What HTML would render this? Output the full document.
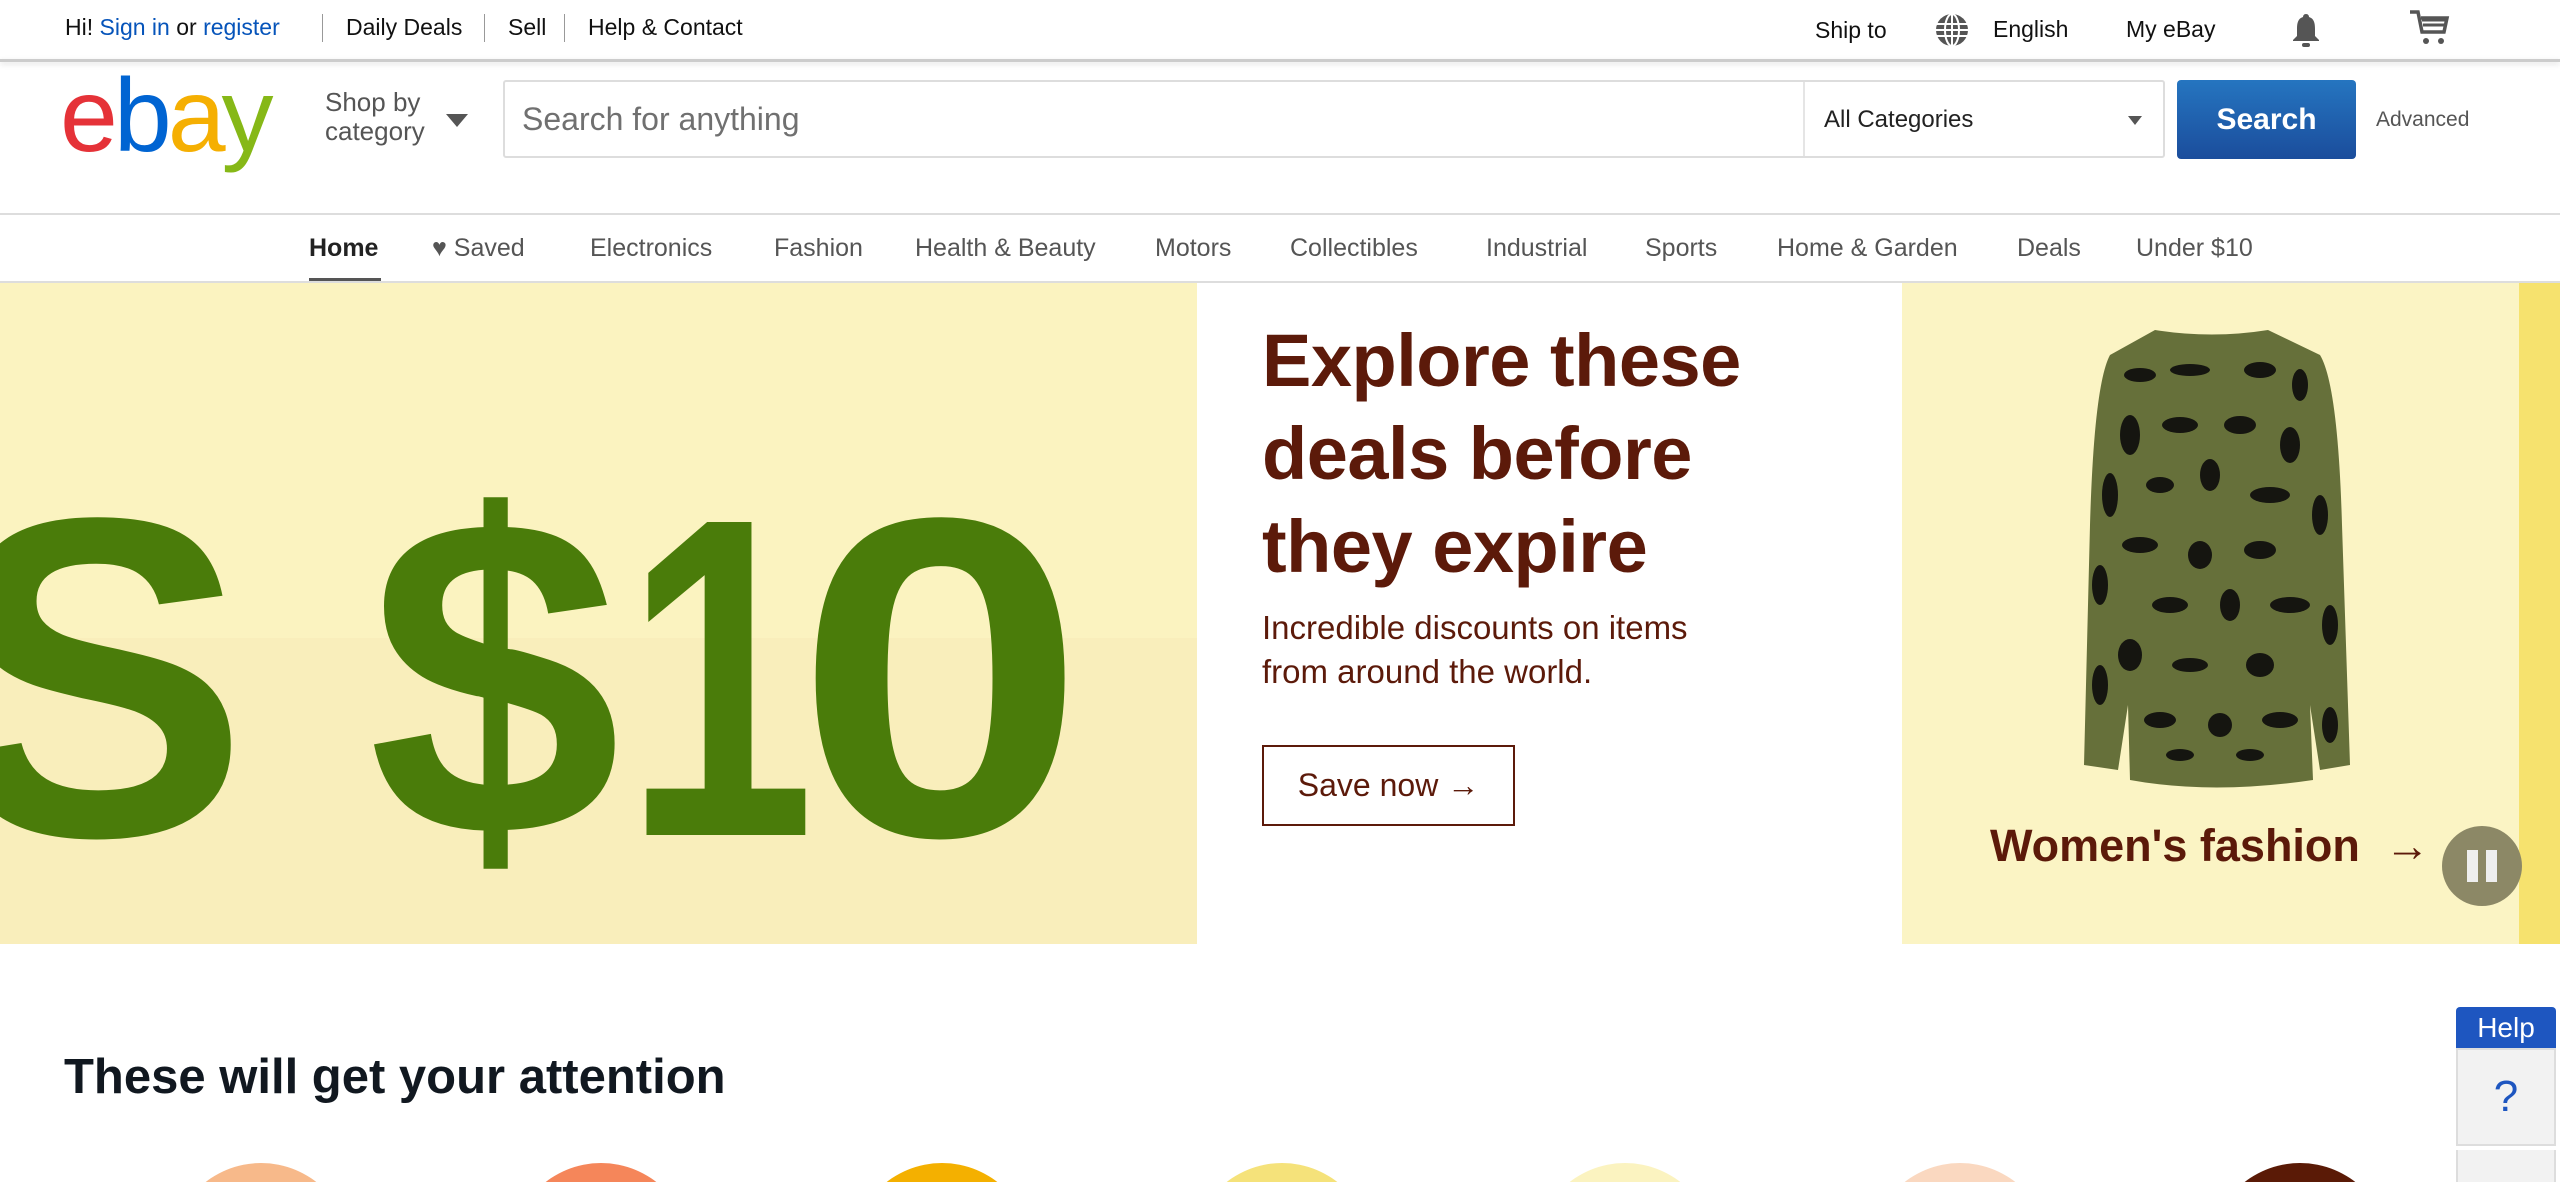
<!DOCTYPE html>
<html style="width:2560px;height:1182px;overflow:hidden"><head><meta charset="utf-8"><style>
*{margin:0;padding:0;box-sizing:border-box}
body{width:2560px;height:1182px;overflow:hidden;background:#fff;font-family:"Liberation Sans",Arial,sans-serif;position:relative;color:#111}
.a{position:absolute;white-space:nowrap}
.top{font-size:23px;color:#111;top:14px}
.sep{position:absolute;top:14px;width:1px;height:28px;background:#999}
.nav{font-size:25px;color:#555;top:234px}
.d{font-size:455px;font-weight:bold;color:#4a7c0a;line-height:1;top:168px}
</style></head><body>
<!-- top bar -->
<div class="a top" style="left:65px">Hi! <span style="color:#0654ba">Sign in</span> or <span style="color:#0654ba">register</span></div>
<div class="sep" style="left:322px"></div>
<div class="a top" style="left:346px">Daily Deals</div>
<div class="sep" style="left:484px"></div>
<div class="a top" style="left:508px">Sell</div>
<div class="sep" style="left:564px"></div>
<div class="a top" style="left:588px">Help &amp; Contact</div>
<div class="a top" style="left:1815px;top:17px">Ship to</div>
<svg class="a" style="left:1934px;top:12px" width="36" height="36" viewBox="0 0 36 36"><circle cx="18" cy="18" r="16" fill="#555"/><g stroke="#fff" stroke-width="2" fill="none"><ellipse cx="18" cy="18" rx="7" ry="16"/><line x1="18" y1="2" x2="18" y2="34"/><line x1="2" y1="12" x2="34" y2="12"/><line x1="2" y1="24" x2="34" y2="24"/><line x1="2" y1="18" x2="34" y2="18"/></g></svg>
<div class="a top" style="left:1993px;top:16px">English</div>
<div class="a top" style="left:2126px;top:16px">My eBay</div>
<svg class="a" style="left:2290px;top:12px" width="32" height="36" viewBox="0 0 32 36"><path d="M16 2c2 0 3 1.5 3 3 5 1.5 6 6 6 12v7l4 4v1H3v-1l4-4v-7c0-6 1-10.5 6-12 0-1.5 1-3 3-3z" fill="#555"/><rect x="12" y="31" width="8" height="4" rx="2" fill="#555"/></svg>
<svg class="a" style="left:2408px;top:10px" width="44" height="36" viewBox="0 0 44 36"><path d="M2 2h8l4 20h22l3-14H13" fill="none" stroke="#555" stroke-width="3.5"/><path d="M14 10h24M15 15h22" stroke="#555" stroke-width="3"/><circle cx="18" cy="31" r="3" fill="#555"/><circle cx="33" cy="31" r="3" fill="#555"/></svg>
<div class="a" style="left:0;top:59px;width:2560px;height:3px;background:#ccc;box-shadow:0 2px 6px #ddd"></div>
<!-- logo -->
<div class="a" style="left:60px;top:64px;font-size:104px;letter-spacing:-4px;line-height:1">
<span style="color:#e53238">e</span><span style="color:#0064d2">b</span><span style="color:#f5af02">a</span><span style="color:#86b817">y</span></div>
<div class="a" style="left:325px;top:88px;font-size:26px;color:#555;line-height:29px">Shop by<br>category</div>
<div class="a" style="left:446px;top:114px;width:0;height:0;border-left:11px solid transparent;border-right:11px solid transparent;border-top:13px solid #555"></div>
<!-- search -->
<div class="a" style="left:503px;top:80px;width:1662px;height:78px;border:2px solid #ddd;border-radius:3px"></div>
<div class="a" style="left:522px;top:101px;font-size:32px;color:#707070">Search for anything</div>
<div class="a" style="left:1803px;top:82px;width:2px;height:74px;background:#e5e5e5"></div>
<div class="a" style="left:1824px;top:106px;font-size:24px;color:#222">All Categories</div>
<div class="a" style="left:2128px;top:116px;width:0;height:0;border-left:7px solid transparent;border-right:7px solid transparent;border-top:9px solid #555"></div>
<div class="a" style="left:2177px;top:80px;width:179px;height:79px;border-radius:4px;background:linear-gradient(#2575c0,#1b4d9c);color:#fff;font-size:30px;font-weight:bold;text-align:center;line-height:79px">Search</div>
<div class="a" style="left:2376px;top:108px;font-size:21px;color:#555">Advanced</div>
<!-- nav -->
<div class="a" style="left:0;top:213px;width:2560px;height:2px;background:#ddd"></div>
<div class="a nav" style="left:309px;color:#222;font-weight:bold">Home</div>
<div class="a" style="left:309px;top:278px;width:72px;height:5px;background:#555"></div>
<div class="a nav" style="left:432px">&#9829; Saved</div>
<div class="a nav" style="left:590px">Electronics</div>
<div class="a nav" style="left:774px">Fashion</div>
<div class="a nav" style="left:915px">Health &amp; Beauty</div>
<div class="a nav" style="left:1155px">Motors</div>
<div class="a nav" style="left:1290px">Collectibles</div>
<div class="a nav" style="left:1486px">Industrial</div>
<div class="a nav" style="left:1645px">Sports</div>
<div class="a nav" style="left:1777px">Home &amp; Garden</div>
<div class="a nav" style="left:2017px">Deals</div>
<div class="a nav" style="left:2136px">Under $10</div>
<div class="a" style="left:0;top:281px;width:2560px;height:2px;background:#ddd"></div>
<!-- banner -->
<div class="a" style="left:0;top:283px;width:1197px;height:661px;background:#fbf3c0;overflow:hidden">
<div class="a" style="left:-60px;top:355px;width:2000px;height:320px;background:#f9eebb"></div>
<div class="a d" style="left:-55px">S</div>
<div class="a d" style="left:368px">$</div>
<div class="a d" style="left:625px;transform:scaleX(0.75);transform-origin:0 0">1</div>
<div class="a d" style="left:795px;transform:scaleX(1.15);transform-origin:0 0">0</div>
</div>
<div class="a" style="left:1262px;top:314px;font-size:74px;font-weight:bold;color:#5c1a0a;line-height:93px;letter-spacing:-0.5px">Explore these<br>deals before<br>they expire</div>
<div class="a" style="left:1262px;top:606px;font-size:33px;color:#5c1a0a;line-height:44px">Incredible discounts on items<br>from around the world.</div>
<div class="a" style="left:1262px;top:745px;width:253px;height:81px;border:2px solid #5c1a0a;font-size:32px;color:#5c1a0a;line-height:77px;text-align:center">Save now &#8594;</div>
<div class="a" style="left:1902px;top:283px;width:618px;height:661px;background:#fbf4c4"></div>
<div class="a" style="left:2519px;top:283px;width:41px;height:661px;background:#f6e26e"></div>
<svg class="a" style="left:2070px;top:325px" width="285" height="465" viewBox="0 0 285 465">
<path d="M85 5 Q142 14 198 5 L250 30 Q268 60 272 200 L280 440 L250 445 L240 380 L243 455 Q142 470 60 455 L58 380 L48 445 L14 440 L20 200 Q24 60 40 30 Z" fill="#66703a"/>
<g fill="#151510">
<ellipse cx="70" cy="50" rx="16" ry="7"/><ellipse cx="120" cy="45" rx="20" ry="6"/><ellipse cx="190" cy="45" rx="16" ry="8"/><ellipse cx="230" cy="60" rx="8" ry="16"/>
<ellipse cx="60" cy="110" rx="10" ry="20"/><ellipse cx="110" cy="100" rx="18" ry="8"/><ellipse cx="170" cy="100" rx="16" ry="9"/><ellipse cx="220" cy="120" rx="10" ry="18"/>
<ellipse cx="40" cy="170" rx="8" ry="22"/><ellipse cx="90" cy="160" rx="14" ry="8"/><ellipse cx="140" cy="150" rx="10" ry="16"/><ellipse cx="200" cy="170" rx="20" ry="8"/><ellipse cx="250" cy="190" rx="8" ry="20"/>
<ellipse cx="70" cy="220" rx="18" ry="8"/><ellipse cx="130" cy="230" rx="12" ry="14"/><ellipse cx="190" cy="225" rx="16" ry="9"/><ellipse cx="30" cy="260" rx="8" ry="20"/>
<ellipse cx="100" cy="280" rx="18" ry="8"/><ellipse cx="160" cy="280" rx="10" ry="16"/><ellipse cx="220" cy="280" rx="20" ry="8"/><ellipse cx="260" cy="300" rx="8" ry="20"/>
<ellipse cx="60" cy="330" rx="12" ry="16"/><ellipse cx="120" cy="340" rx="18" ry="7"/><ellipse cx="190" cy="340" rx="14" ry="12"/><ellipse cx="30" cy="360" rx="8" ry="20"/>
<ellipse cx="90" cy="395" rx="16" ry="8"/><ellipse cx="150" cy="400" rx="12" ry="12"/><ellipse cx="210" cy="395" rx="18" ry="8"/><ellipse cx="260" cy="400" rx="8" ry="18"/>
<ellipse cx="110" cy="430" rx="14" ry="6"/><ellipse cx="180" cy="430" rx="14" ry="6"/>
</g></svg>
<div class="a" style="left:1990px;top:820px;font-size:45px;font-weight:bold;color:#5c1a0a">Women's fashion &nbsp;&#8594;</div>
<div class="a" style="left:2442px;top:826px;width:80px;height:80px;border-radius:50%;background:#8c8866"></div>
<div class="a" style="left:2467px;top:850px;width:11px;height:32px;background:#eee"></div>
<div class="a" style="left:2486px;top:850px;width:11px;height:32px;background:#eee"></div>
<!-- section -->
<div class="a" style="left:64px;top:1049px;font-size:49px;font-weight:bold;color:#111820">These will get your attention</div>
<svg class="a" style="left:0;top:1150px" width="2560" height="32" viewBox="0 1150 2560 32">
<circle cx="261" cy="1253" r="90" fill="#f7b98a"/>
<circle cx="601" cy="1253" r="90" fill="#f5865a"/>
<circle cx="942" cy="1253" r="90" fill="#f4b000"/>
<circle cx="1282" cy="1253" r="90" fill="#f5e27a"/>
<circle cx="1625" cy="1253" r="90" fill="#fbf3c0"/>
<circle cx="1960" cy="1253" r="90" fill="#fad8c0"/>
<circle cx="2300" cy="1253" r="90" fill="#5a1a06"/>
<rect x="2457" y="1149" width="98" height="40" fill="#f2f2f2" stroke="#ddd" stroke-width="2"/>
</svg>
<!-- help -->
<div class="a" style="left:2456px;top:1007px;width:100px;height:41px;background:#1e56c0;color:#fff;font-size:28px;text-align:center;line-height:41px;border-radius:4px 4px 0 0">Help</div>
<div class="a" style="left:2456px;top:1048px;width:100px;height:98px;background:#f2f2f2;border:2px solid #ddd;color:#1e56c0;font-size:44px;text-align:center;line-height:94px">?</div>
</body></html>
